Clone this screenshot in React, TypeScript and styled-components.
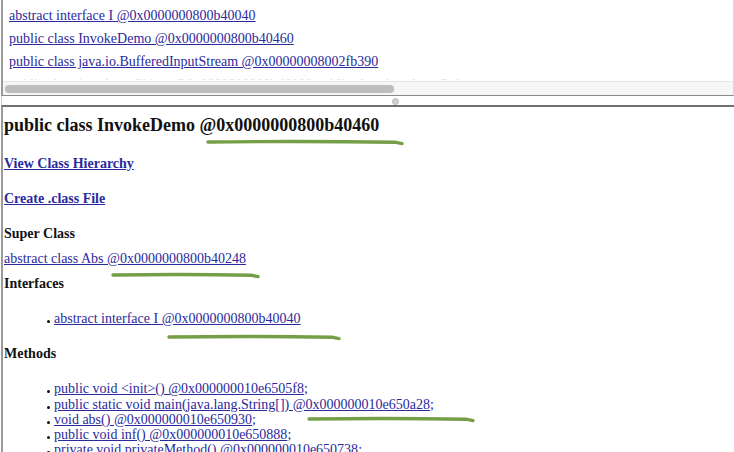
import React from "react";
import styled, { createGlobalStyle } from "styled-components";

const Global = createGlobalStyle`
  html, body { margin: 0; padding: 0; background: #fff; }
  body { font-family: "Liberation Serif", "Times New Roman", serif; color: #111; overflow: hidden; }
`;

const Page = styled.div`
  width: 734px;
  height: 452px;
  overflow: hidden;
  display: flex;
  flex-direction: column;
`;

const TopFrame = styled.div`
  height: 96px;
  box-sizing: border-box;
  border-left: 2px solid #9a9a9a;
  border-right: 1px solid #d8d8d8;
  border-bottom: 1px solid #8a8a8a;
  margin-left: 1px;
  display: flex;
  flex-direction: column;
  overflow: hidden;
`;

const TopList = styled.div`
  flex: 1;
  padding: 8px 0 0 6px;
  display: flex;
  flex-direction: column;
  gap: 7px;
  overflow: hidden;
`;

const Link = styled.a<{ $bold?: boolean }>`
  color: #2a2a9c;
  text-decoration: underline;
  font-size: 14px;
  line-height: 16px;
  font-weight: ${(p) => (p.$bold ? 700 : 400)};
  white-space: nowrap;
`;

const FadedLink = styled(Link)`
  color: #dcdcec;
  height: 3px;
  overflow: hidden;
`;

const ScrollTrack = styled.div`
  height: 14px;
  box-sizing: border-box;
  background: #f6f6f6;
  border-top: 1px solid #e6e6e6;
  padding: 3px 2px 0 2px;
`;

const ScrollThumb = styled.div`
  width: 389px;
  height: 8px;
  border-radius: 4px;
  background: #bdbdbd;
`;

const Splitter = styled.div`
  height: 9px;
  position: relative;
  border-left: 1px solid #cfcfcf;
  margin-left: 1px;
`;

const Grip = styled.div`
  position: absolute;
  left: 390px;
  top: 2px;
  width: 5px;
  height: 5px;
  border-radius: 50%;
  background: #cfcfcf;
  border: 1px solid #b8b8b8;
`;

const BottomFrame = styled.div`
  flex: 1;
  border-top: 2px solid #6f6f6f;
  border-left: 2px solid #9a9a9a;
  margin-left: 1px;
  padding: 0 0 0 1px;
  overflow: hidden;
`;

const Title = styled.h1`
  font-size: 18px;
  line-height: 22px;
  font-weight: 700;
  margin: 7px 0 0 0;
  position: relative;
  white-space: nowrap;
`;

const Para = styled.p<{ $top: number }>`
  margin: ${(p) => p.$top}px 0 0 0;
  line-height: 16px;
  position: relative;
`;

const SectionHead = styled.div<{ $top: number }>`
  font-size: 14px;
  line-height: 16px;
  font-weight: 700;
  margin-top: ${(p) => p.$top}px;
`;

const List = styled.ul<{ $top: number }>`
  margin: ${(p) => p.$top}px 0 0 0;
  padding: 0 0 0 50px;
  list-style: none;
  font-size: 14px;
`;

const Item = styled.li`
  line-height: 15.25px;
  height: 15.25px;
  position: relative;
  white-space: nowrap;
  &::before {
    content: "";
    position: absolute;
    left: -7px;
    top: 9px;
    width: 3px;
    height: 3px;
    border-radius: 50%;
    background: #111;
  }
`;

const Semi = styled.span`
  color: #2a2a9c;
  font-size: 14px;
`;

const Marker = styled.svg<{ $left: number; $top: number; $w: number }>`
  position: absolute;
  left: ${(p) => p.$left}px;
  top: ${(p) => p.$top}px;
  width: ${(p) => p.$w}px;
  height: 6px;
  overflow: visible;
  pointer-events: none;
`;

const Mark = ({ left, top, w }: { left: number; top: number; w: number }) => (
  <Marker $left={left} $top={top} $w={w} viewBox={`0 0 ${w} 6`}>
    <path
      d={`M1 2 Q ${w * 0.5} 1 ${w - 8} 2.2 L ${w - 1} 3.6`}
      stroke="#6e9a3c"
      strokeWidth={3.4}
      strokeLinecap="round"
      fill="none"
      opacity={0.95}
    />
  </Marker>
);

const methods = [
  "public void <init>() @0x000000010e6505f8",
  "public static void main(java.lang.String[]) @0x000000010e650a28",
  "void abs() @0x000000010e650930",
  "public void inf() @0x000000010e650888",
  "private void privateMethod() @0x000000010e650738",
];

export default function App() {
  return (
    <Page>
      <Global />
      <TopFrame>
        <TopList>
          <Link href="#">abstract interface I @0x0000000800b40040</Link>
          <Link href="#">public class InvokeDemo @0x0000000800b40460</Link>
          <Link href="#">public class java.io.BufferedInputStream @0x00000008002fb390</Link>
          <FadedLink href="#">public class java.lang.Object @0x0000000800b40000 public class java.lang.String</FadedLink>
        </TopList>
        <ScrollTrack>
          <ScrollThumb />
        </ScrollTrack>
      </TopFrame>
      <Splitter>
        <Grip />
      </Splitter>
      <BottomFrame>
        <Title>
          public class InvokeDemo @0x0000000800b40460
          <Mark left={203} top={26} w={196} />
        </Title>
        <Para $top={19}>
          <Link href="#" $bold>View Class Hierarchy</Link>
        </Para>
        <Para $top={18}>
          <Link href="#" $bold>Create .class File</Link>
        </Para>
        <SectionHead $top={19}>Super Class</SectionHead>
        <Para $top={8}>
          <Link href="#">abstract class Abs @0x0000000800b40248</Link>
          <Mark left={108} top={23} w={147} />
        </Para>
        <SectionHead $top={9}>Interfaces</SectionHead>
        <List $top={19}>
          <Item>
            <Link href="#">abstract interface I @0x0000000800b40040</Link>
            <Mark left={114} top={24} w={172} />
          </Item>
        </List>
        <SectionHead $top={20}>Methods</SectionHead>
        <List $top={19}>
          {methods.map((m, i) => (
            <Item key={m}>
              <Link href="#">{m}</Link>
              <Semi>;</Semi>
              {i === 2 && <Mark left={254} top={5} w={166} />}
            </Item>
          ))}
        </List>
      </BottomFrame>
    </Page>
  );
}
